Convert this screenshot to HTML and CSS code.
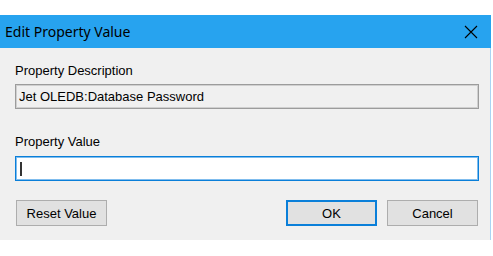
FILE: index.html
```html
<!DOCTYPE html>
<html>
<head>
<meta charset="utf-8">
<link rel="stylesheet" href="styles.css">
</head>
<body>
<div class="window">
  <div class="titlebar">
    <span class="title">Edit Property Value</span>
    <svg class="close" width="14" height="14" viewBox="0 0 14 14"><path d="M1 1 L13 13 M13 1 L1 13" stroke="#000" stroke-width="1.1" fill="none"/></svg>
  </div>
  <div class="content">
    <div class="label">Property Description</div>
    <div class="field readonly">Jet OLEDB:Database Password</div>
    <div class="label label2">Property Value</div>
    <div class="field active"><span class="caret"></span></div>
    <div class="buttons">
      <button class="btn reset">Reset Value</button>
      <div class="spacer"></div>
      <button class="btn ok">OK</button>
      <button class="btn">Cancel</button>
    </div>
  </div>
</div>
</body>
</html>
```
FILE: styles.css
```css
html, body {
  margin: 0;
  padding: 0;
  background: #ffffff;
}
.window {
  margin-top: 15px;
  width: 491px;
  height: 225px;
  display: flex;
  flex-direction: column;
  background: #f0f0f0;
  border-right: 1px solid #a9d3f3;
  box-sizing: border-box;
}
.titlebar {
  height: 33px;
  background: #27a3ef;
  display: flex;
  align-items: center;
  justify-content: space-between;
  padding: 0 13px 0 5px;
  margin-right: -1px;
}
.title {
  font-family: "Noto Sans", sans-serif;
  font-size: 14px;
  color: #000;
  margin-top: -1px;
}
.close {
  display: block;
}
.content {
  flex: 1;
  display: flex;
  flex-direction: column;
  padding: 15px 11px 0 15px;
  border-left: 1px solid #a9d3f3;
  margin-left: -1px;
  font-family: "Liberation Sans", Arial, sans-serif;
  font-size: 13px;
}
.label {
  line-height: 16px;
  color: #000;
  height: 16px;
}
.field {
  margin-top: 5px;
  height: 25px;
  box-sizing: border-box;
  display: flex;
  align-items: center;
  padding-left: 3px;
  color: #000;
}
.readonly {
  background: #f0f0f0;
  border: 1px solid #9c9c9c;
  box-shadow: inset 0 0 0 1px #d0d0d0;
}
.label2 {
  margin-top: 25px;
}
.active {
  margin-top: 6px;
  background: #fff;
  border: 1px solid #0a7fd9;
  box-shadow: inset 0 0 0 1px #80bdee;
}
.caret {
  width: 2px;
  height: 14px;
  background: #333;
  margin-left: 1px;
}
.buttons {
  display: flex;
  margin-top: 19px;
  gap: 10px;
  padding-left: 1px;
  padding-right: 1px;
}
.spacer {
  flex: 1;
}
.btn {
  width: 91px;
  height: 26px;
  background: #e1e1e1;
  border: 1px solid #adadad;
  font-family: "Liberation Sans", Arial, sans-serif;
  font-size: 13px;
  color: #000;
  padding: 0;
  margin: 0;
}
.ok {
  border: 2px solid #0a7fd9;
}
```
